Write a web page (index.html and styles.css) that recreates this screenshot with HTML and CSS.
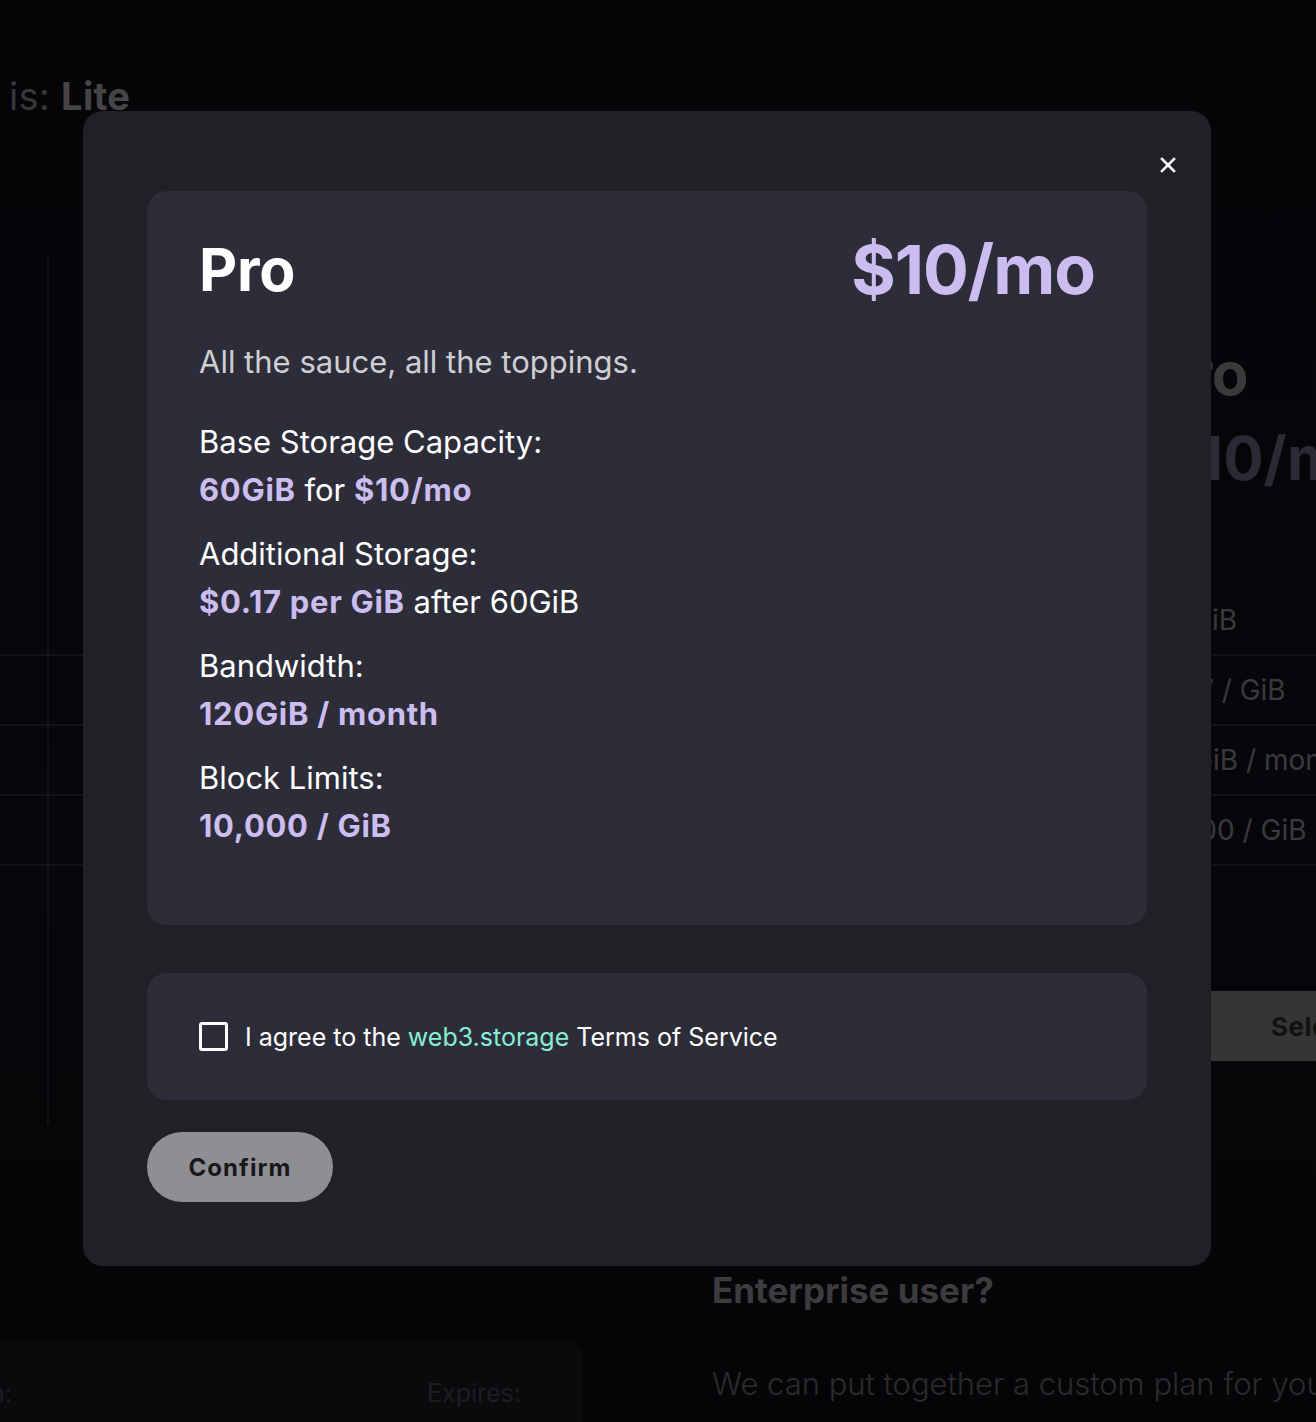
FILE: index.html
```html
<!DOCTYPE html>
<html lang="en">
<head>
<meta charset="utf-8">
<title>Change plan</title>
<link rel="stylesheet" href="styles.css">
</head>
<body>
<div class="bg-page">
  <h2 class="bg-title"><span class="bg-title-label">is:</span> <strong>Lite</strong></h2>

  <section class="bg-plans">
    <div class="bg-head">
      <div class="bg-spacer"></div>
      <div class="bg-col">
        <div class="bg-plan-name">Pro</div>
        <div class="bg-plan-price">$10/mo</div>
      </div>
    </div>
    <div class="bg-row bg-row-first"><div class="bg-spacer"></div><div class="bg-cell">60GiB</div></div>
    <div class="bg-row"><div class="bg-spacer"></div><div class="bg-cell">$0.17 / GiB</div></div>
    <div class="bg-row"><div class="bg-spacer"></div><div class="bg-cell">120GiB / month</div></div>
    <div class="bg-row"><div class="bg-spacer"></div><div class="bg-cell">10,000 / GiB</div></div>
    <div class="bg-foot">
      <div class="bg-spacer"></div>
      <div class="bg-col"><button class="bg-select">Select</button></div>
    </div>
  </section>

  <section class="bg-bottom">
    <div class="bg-card">
      <span>Subscription:</span>
      <span>Expires:</span>
    </div>
    <div class="bg-enterprise">
      <h3>Enterprise user?</h3>
      <p>We can put together a custom plan for you</p>
    </div>
  </section>
</div>

<div class="overlay">
  <div class="modal">
    <button class="close" aria-label="Close">
      <svg width="16" height="16" viewBox="0 0 16 16"><path d="M2 2 L14 14 M14 2 L2 14" stroke="#ffffff" stroke-width="2.6" stroke-linecap="square" fill="none"/></svg>
    </button>

    <div class="plan-card">
      <div class="plan-header">
        <h1 class="plan-name">Pro</h1>
        <div class="plan-price">$10/mo</div>
      </div>
      <p class="plan-desc">All the sauce, all the toppings.</p>
      <div class="plan-features">
        <div class="feature">
          <div>Base Storage Capacity:</div>
          <div><b>60GiB</b> for <b>$10/mo</b></div>
        </div>
        <div class="feature">
          <div>Additional Storage:</div>
          <div><b>$0.17 per GiB</b> after 60GiB</div>
        </div>
        <div class="feature">
          <div>Bandwidth:</div>
          <div><b>120GiB / month</b></div>
        </div>
        <div class="feature">
          <div>Block Limits:</div>
          <div><b>10,000 / GiB</b></div>
        </div>
      </div>
    </div>

    <label class="terms">
      <span class="checkbox"></span>
      <span class="terms-text">I agree to the <a class="link" href="#">web3.storage</a> Terms of Service</span>
    </label>

    <button class="confirm">Confirm</button>
  </div>
</div>
</body>
</html>
```

FILE: styles.css
```css
* { box-sizing: border-box; }

html, body {
  margin: 0;
  padding: 0;
}

body {
  width: 1316px;
  height: 1422px;
  overflow: hidden;
  background: linear-gradient(180deg, #050508 0%, #07070b 60%, #050507 100%);
  font-family: Inter, "Noto Sans", "Liberation Sans", sans-serif;
  color: #fff;
}

/* ---------- dimmed page behind the modal ---------- */
.bg-page {
  width: 1316px;
  height: 1422px;
  overflow: hidden;
}

.bg-title {
  margin: 0;
  padding: 74px 0 0 9px;
  font-size: 38px;
  line-height: 44px;
  font-weight: 400;
  letter-spacing: 0.3px;
  color: #38383b;
  white-space: nowrap;
}
.bg-title strong {
  font-weight: 700;
  color: #454547;
}

.bg-plans {
  margin-top: 140px;
  height: 867px;
  width: 1700px;
  background-image: linear-gradient(#121217, #121217);
  background-repeat: no-repeat;
  background-position: 47px 0;
  background-size: 2px 100%;
}

.bg-spacer {
  width: 1150px;
  flex: none;
}

.bg-head {
  display: flex;
  height: 326px;
  padding-top: 79px;
}
.bg-col { display: flex; flex-direction: column; }
.bg-plan-name {
  font-size: 60px;
  line-height: 72px;
  font-weight: 700;
  color: #3a3a3c;
}
.bg-plan-price {
  margin-top: 13px;
  margin-left: 8px;
  font-size: 60px;
  line-height: 72px;
  font-weight: 700;
  color: #2a2a35;
  white-space: nowrap;
}

.bg-row {
  display: flex;
  align-items: center;
  height: 70px;
  border-top: 2px solid #131317;
  font-size: 28px;
  color: #3a3a3c;
  white-space: nowrap;
}
.bg-row-first { border-top-color: transparent; }
.bg-row-first .bg-cell { margin-left: 6px; }
.bg-cell { margin-left: -4px; }

.bg-foot {
  display: flex;
  height: 260px;
  border-top: 2px solid #131317;
  padding-top: 125px;
}
.bg-select {
  width: 325px;
  height: 70px;
  border: 0;
  border-radius: 0;
  background: #353535;
  color: #111113;
  font-family: inherit;
  font-size: 26px;
  font-weight: 700;
  letter-spacing: 0.5px;
}

.bg-bottom {
  display: flex;
  align-items: flex-start;
  margin-top: 145px;
}
.bg-card {
  flex: none;
  margin-left: -200px;
  margin-top: 70px;
  width: 782px;
  height: 200px;
  padding: 37px 0 0 56px;
  border-radius: 18px;
  background: #0a0a0d;
  display: grid;
  grid-template-columns: 571px auto;
  align-content: start;
  font-size: 25px;
  line-height: 32px;
  color: #1d1d21;
}
.bg-enterprise {
  margin-left: 130px;
  white-space: nowrap;
}
.bg-enterprise h3 {
  margin: 0;
  font-size: 35px;
  line-height: 41px;
  font-weight: 700;
  color: #3c3c3e;
  letter-spacing: 0;
}
.bg-enterprise p {
  margin: 55px 0 0;
  font-size: 31px;
  line-height: 36px;
  font-weight: 300;
  color: #2b2b2d;
}

/* ---------- modal ---------- */
.overlay {
  position: fixed;
  inset: 0;
  padding: 111px 0 0 83px;
}

.modal {
  position: relative;
  width: 1128px;
  height: 1155px;
  padding: 80px 64px 64px;
  border-radius: 20px;
  background: #202126;
  display: flex;
  flex-direction: column;
  align-items: flex-start;
}

.close {
  position: absolute;
  top: 46px;
  right: 35px;
  width: 16px;
  height: 16px;
  padding: 0;
  border: 0;
  background: none;
  display: flex;
}

.plan-card {
  width: 1000px;
  padding: 41px 52px 75px;
  border-radius: 20px;
  background: #2d2d39;
}

.plan-header {
  display: flex;
  justify-content: space-between;
  align-items: baseline;
}
.plan-name {
  margin: 0;
  font-size: 59px;
  line-height: 58px;
  font-weight: 700;
  letter-spacing: -0.3px;
  color: #ffffff;
}
.plan-price {
  font-size: 68px;
  line-height: 68px;
  font-weight: 700;
  letter-spacing: -1px;
  color: #cbbdf0;
  position: relative;
  top: 3px;
}

.plan-desc {
  margin: 38px 0 0;
  font-size: 31px;
  line-height: 48px;
  color: #cfcfd3;
}

.plan-features {
  margin-top: 32px;
  display: flex;
  flex-direction: column;
  gap: 16px;
}
.feature {
  font-size: 31px;
  line-height: 48px;
  color: #ffffff;
}
.feature b {
  font-weight: 700;
  color: #cbbdf0;
  letter-spacing: 0.7px;
}

.terms {
  margin-top: 48px;
  width: 1000px;
  height: 127px;
  padding: 0 52px;
  border-radius: 20px;
  background: #2d2d39;
  display: flex;
  align-items: center;
  gap: 17px;
}
.checkbox {
  flex: none;
  width: 29px;
  height: 29px;
  border: 3px solid #ffffff;
  border-radius: 3px;
}
.terms-text {
  font-size: 25px;
  line-height: 34px;
  color: #ffffff;
}
.link {
  color: #86efd3;
  text-decoration: none;
}

.confirm {
  margin-top: 32px;
  width: 186px;
  height: 70px;
  border: 0;
  border-radius: 35px;
  background: #8f8f93;
  color: #18181c;
  font-family: inherit;
  font-size: 24px;
  font-weight: 700;
  letter-spacing: 1.1px;
}
```
